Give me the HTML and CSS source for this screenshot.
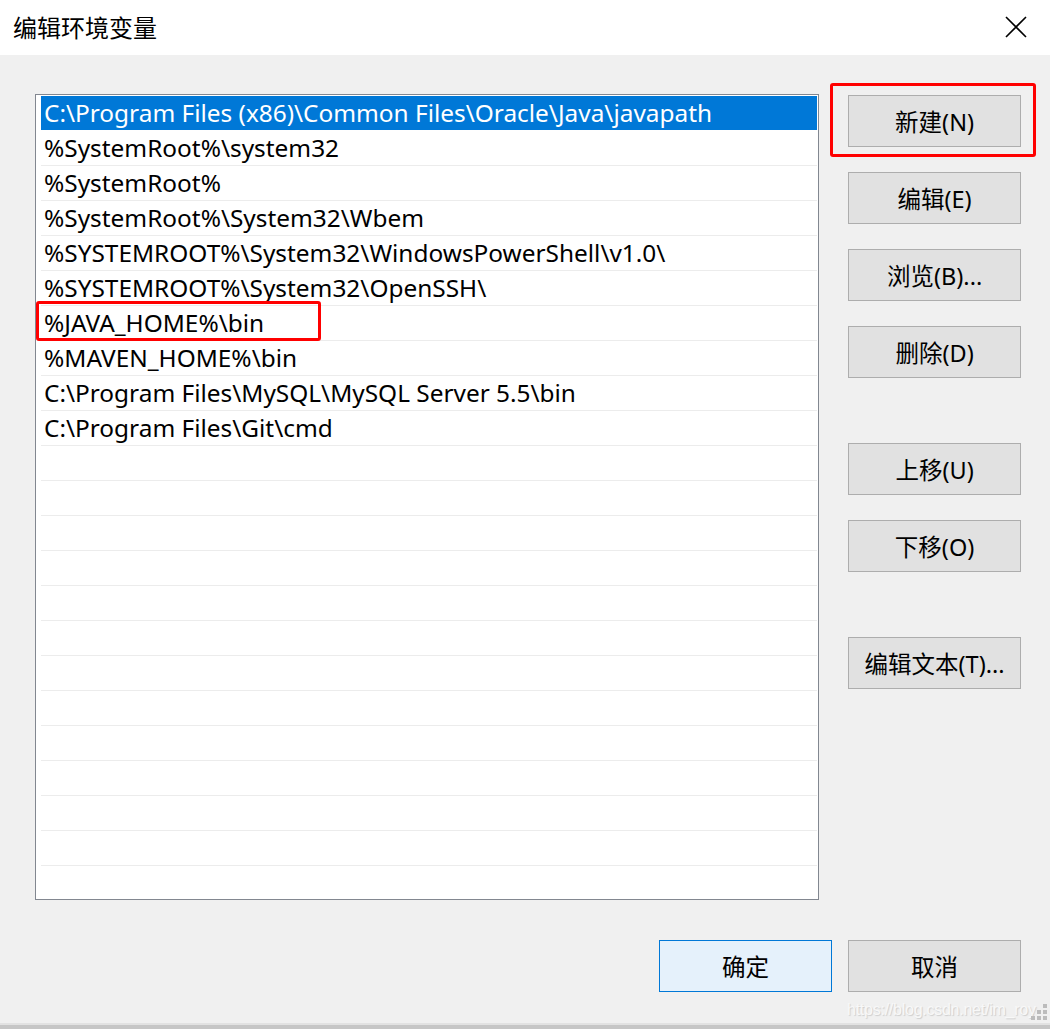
FILE: index.html
```html
<!DOCTYPE html>
<html>
  <head>
    <title>编辑环境变量</title>
    <link rel="stylesheet" href="styles.css">
  </head>
  <body>
    <div class="window">
      <div class="titlebar">
        <div class="title">编辑环境变量</div>
        <svg class="close" width="22" height="22" viewBox="0 0 22 22">
          <path d="M1 1 L21 21 M21 1 L1 21" stroke="#000" stroke-width="1.6" fill="none"/>
        </svg>
      </div>

      <div class="content">
        <div class="main">
          <div class="list">
            <div class="row selected">C:\Program Files (x86)\Common Files\Oracle\Java\javapath</div>
            <div class="row">%SystemRoot%\system32</div>
            <div class="row">%SystemRoot%</div>
            <div class="row">%SystemRoot%\System32\Wbem</div>
            <div class="row">%SYSTEMROOT%\System32\WindowsPowerShell\v1.0\</div>
            <div class="row">%SYSTEMROOT%\System32\OpenSSH\</div>
            <div class="row marked">%JAVA_HOME%\bin<span class="mark mark-row"></span></div>
            <div class="row">%MAVEN_HOME%\bin</div>
            <div class="row">C:\Program Files\MySQL\MySQL Server 5.5\bin</div>
            <div class="row">C:\Program Files\Git\cmd</div>
            <div class="row"></div>
            <div class="row"></div>
            <div class="row"></div>
            <div class="row"></div>
            <div class="row"></div>
            <div class="row"></div>
            <div class="row"></div>
            <div class="row"></div>
            <div class="row"></div>
            <div class="row"></div>
            <div class="row"></div>
            <div class="row"></div>
          </div>

          <div class="actions">
            <div class="group">
              <div class="button marked">新建(N)<span class="mark mark-button"></span></div>
              <div class="button">编辑(E)</div>
              <div class="button">浏览(B)...</div>
              <div class="button">删除(D)</div>
            </div>
            <div class="group">
              <div class="button">上移(U)</div>
              <div class="button">下移(O)</div>
            </div>
            <div class="group">
              <div class="button">编辑文本(T)...</div>
            </div>
          </div>
        </div>

        <div class="footer">
          <div class="button default">确定</div>
          <div class="button">取消</div>
        </div>

        <div class="watermark">https://blog.csdn.net/im_roy</div>
        <div class="grip">
          <i style="grid-area: 1 / 3"></i>
          <i style="grid-area: 2 / 2"></i>
          <i style="grid-area: 2 / 3"></i>
          <i style="grid-area: 3 / 1"></i>
          <i style="grid-area: 3 / 2"></i>
          <i style="grid-area: 3 / 3"></i>
        </div>
      </div>
      <div class="edge"></div>
    </div>
  </body>
</html>
```

FILE: styles.css
```css
body {
  margin: 0;
  font-family: "Noto Sans", "Noto Sans CJK SC", sans-serif;
  background-color: #f0f0f0;
}
.window {
  width: 1050px;
  height: 1029px;
  display: flex;
  flex-direction: column;
  overflow: hidden;
}
.titlebar {
  height: 55px;
  background-color: #fff;
  display: flex;
  align-items: center;
  justify-content: space-between;
  padding: 0 23px 0 13px;
  flex-shrink: 0;
}
.title {
  font-size: 24px;
  color: #000;
  margin-top: -2px;
}
.close {
  margin-top: -1px;
}
.content {
  flex: 1;
  position: relative;
  background-color: #f0f0f0;
  padding: 39px 29px 0 35px;
}
.main {
  display: flex;
  gap: 29px;
}
.list {
  width: 777px;
  height: 803px;
  border: 1px solid #828790;
  background-color: #fff;
  padding: 1px 1px 0 5px;
  overflow: hidden;
}
.row {
  position: relative;
  height: 34px;
  line-height: 34px;
  border-bottom: 1px solid #ececec;
  padding-left: 3px;
  font-size: 24.4px;
  color: #000;
  white-space: nowrap;
}
.row.selected {
  background-color: #0078d7;
  color: #fff;
  border-bottom-color: #fff;
}
.mark {
  position: absolute;
  border: 3px solid #ff0000;
  border-radius: 3px;
  pointer-events: none;
}
.mark-row {
  left: -5px;
  top: -5px;
  width: 279px;
  height: 34px;
}
.mark-button {
  left: -19px;
  top: -13px;
  right: -16px;
  bottom: -11px;
}
.actions {
  width: 173px;
  display: flex;
  flex-direction: column;
  gap: 65px;
  padding-top: 1px;
}
.group {
  display: flex;
  flex-direction: column;
  gap: 25px;
}
.button {
  position: relative;
  height: 50px;
  border: 1px solid #adadad;
  background-color: #e1e1e1;
  display: flex;
  align-items: center;
  justify-content: center;
  font-size: 23.5px;
  color: #000;
}
.footer {
  display: flex;
  justify-content: flex-end;
  gap: 16px;
  margin-top: 40px;
}
.footer .button {
  width: 171px;
}
.button.default {
  border-color: #0078d7;
  background-color: #e5f1fb;
}
.watermark {
  position: absolute;
  left: 847px;
  top: 946px;
  line-height: 18px;
  font-family: "Liberation Sans", Arial, sans-serif;
  font-size: 16px;
  color: #f8f8f8;
  text-shadow: 1px 1px 1px #cdcdcd;
  letter-spacing: -0.25px;
  white-space: nowrap;
}
.grip {
  position: absolute;
  right: 3px;
  bottom: 3px;
  display: grid;
  grid-template-columns: repeat(3, 4px);
  grid-template-rows: repeat(3, 4px);
  gap: 2px;
}
.grip i {
  background-color: #bcbcbc;
}
.edge {
  height: 6px;
  flex-shrink: 0;
  border-top: 2px solid #e2e2e2;
  background-color: #c6c6c6;
  box-sizing: border-box;
}
```
